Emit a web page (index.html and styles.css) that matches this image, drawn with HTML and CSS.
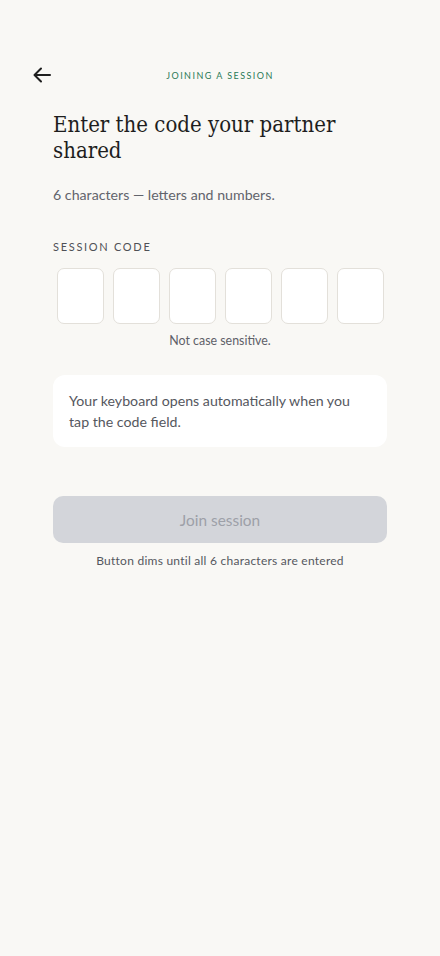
FILE: index.html
```html
<!DOCTYPE html>
<html lang="en">
<head>
    <meta charset="UTF-8">
    <meta name="viewport" content="width=device-width, initial-scale=1.0">
    <title>Join a session</title>
    <link rel="stylesheet" href="styles.css">
</head>
<body>
    <div class="screen">
        <header class="top-bar">
            <a href="#" class="back" aria-label="Back">
                <svg width="18" height="16" viewBox="0 0 18 16" fill="none" stroke="#1f1f1f" stroke-width="2" stroke-linecap="round" stroke-linejoin="round">
                    <path d="M17 8H2"/>
                    <path d="M8 1.5L1.5 8L8 14.5"/>
                </svg>
            </a>
            <div class="eyebrow">Joining a session</div>
        </header>

        <main class="content">
            <h1>Enter the code your partner shared</h1>
            <p class="subtitle">6 characters — letters and numbers.</p>

            <div class="field-label">Session code</div>
            <div class="code-boxes">
                <div class="code-box"></div>
                <div class="code-box"></div>
                <div class="code-box"></div>
                <div class="code-box"></div>
                <div class="code-box"></div>
                <div class="code-box"></div>
            </div>
            <p class="hint">Not case sensitive.</p>

            <div class="info-card">
                Your keyboard opens automatically when you tap the code field.
            </div>

            <button class="join-btn" disabled>Join session</button>
            <p class="caption">Button dims until all 6 characters are entered</p>
        </main>
    </div>
</body>
</html>
```

FILE: styles.css
```css
* {
    margin: 0;
    padding: 0;
    box-sizing: border-box;
}

body {
    background-color: #f9f8f5;
    font-family: 'Lato', 'Noto Sans', sans-serif;
    color: #2b2b2b;
}

.screen {
    min-height: 956px;
    padding-top: 55px;
}

/* Top bar */
.top-bar {
    position: relative;
    height: 40px;
    display: flex;
    align-items: center;
    justify-content: center;
}

.back {
    position: absolute;
    left: 33px;
    top: 12px;
    display: flex;
}

.eyebrow {
    font-size: 9px;
    line-height: 12px;
    letter-spacing: 1.45px;
    text-transform: uppercase;
    color: #2b7a57;
    margin-top: 1px;
}

/* Content */
.content {
    padding: 17px 53px 0;
}

h1 {
    font-family: 'DejaVu Serif Condensed', 'DejaVu Serif', serif;
    font-stretch: semi-condensed;
    font-weight: 400;
    font-size: 22px;
    line-height: 26px;
    color: #1e1e1e;
    padding-right: 20px;
}

.subtitle {
    margin-top: 21px;
    font-size: 14.2px;
    line-height: 20px;
    color: #62646c;
}

.field-label {
    margin-top: 35px;
    font-size: 11px;
    line-height: 14px;
    letter-spacing: 1.7px;
    text-transform: uppercase;
    color: #4f5056;
}

.code-boxes {
    display: flex;
    justify-content: center;
    gap: 9px;
    margin-top: 14px;
}

.code-box {
    width: 47px;
    height: 56px;
    background-color: #fff;
    border: 1px solid #e3e0da;
    border-radius: 7px;
}

.hint {
    margin-top: 9px;
    text-align: center;
    font-size: 12.4px;
    line-height: 16px;
    color: #5e6068;
}

.info-card {
    margin-top: 26px;
    background-color: #fff;
    border-radius: 12px;
    padding: 15px 16px;
    font-size: 14.2px;
    line-height: 21px;
    color: #55575e;
}

.join-btn {
    display: block;
    width: 100%;
    height: 47px;
    margin-top: 49px;
    border: none;
    border-radius: 10px;
    background-color: #d3d5da;
    color: #9da0a8;
    font-family: inherit;
    font-size: 15.4px;
}

.caption {
    margin-top: 10px;
    text-align: center;
    font-size: 12px;
    line-height: 16px;
    letter-spacing: 0.25px;
    color: #55575e;
}
```
